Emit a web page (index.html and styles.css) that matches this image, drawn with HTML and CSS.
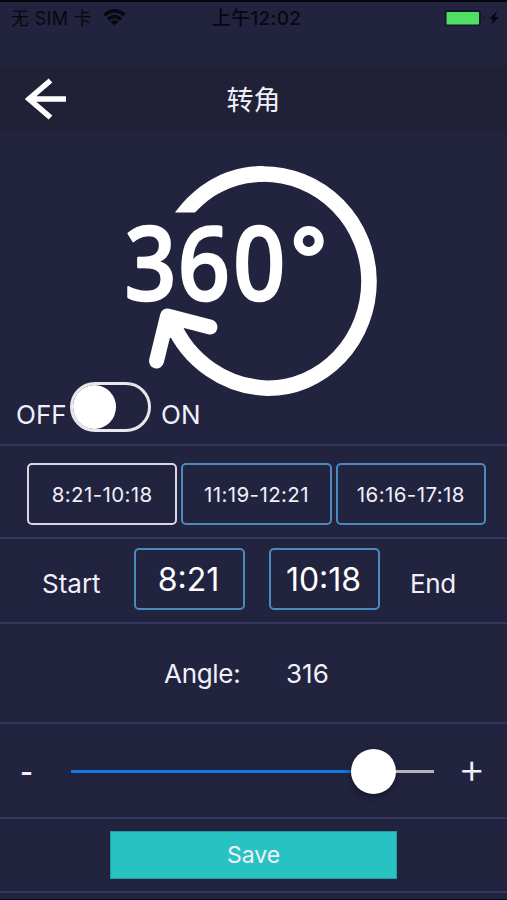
FILE: index.html
```
<!DOCTYPE html>
<html lang="zh-CN">
<head>
<meta charset="utf-8">
<title>转角</title>
<link rel="stylesheet" href="styles.css">
</head>
<body>
<div class="status">
  <div class="carrier"><span>无 SIM 卡</span>
    <svg class="wifi" width="23" height="17" viewBox="0 0 23 17"><g fill="none" stroke="#080811" stroke-width="3.6"><path d="M1.300 6.200Q11.500-2.500 21.700 6.200"/><path d="M5 10.400Q11.500 4.800 18 10.400"/></g><path d="M7.500 12.700Q11.500 9.500 15.500 12.700L11.500 16.600Z" fill="#080811"/></svg>
  </div>
  <span class="clock">上午12:02</span>
  <svg class="battery" width="58" height="18" viewBox="0 0 58 18"><rect x=".7" y="1" width="36.6" height="16" rx="3" fill="#18182b"/><rect x="2.500" y="3" width="32.500" height="12.500" rx="1" fill="#50df65"/><path d="M39.500 7q2 2 0 4z" fill="#101020"/><path d="M53 2 45 10h4l-2 6 8-8h-4z" fill="#080811"/></svg>
</div>
<header class="nav">
  <svg class="back" width="42" height="42" viewBox="0 0 42 42"><path d="M41 21H4M25.500 2.500 4 21 25.500 39.500" fill="none" stroke="#fff" stroke-width="5.600"/></svg>
  <h1>转角</h1>
</header>
<section class="hero">
  <svg class="dial" width="507" height="312" viewBox="0 132 507 312">
    <g fill="none" stroke="#fff" stroke-width="15.600">
      <path d="M263 174A106 107.500 0 0 1 369 281.500A101 107 0 0 1 268 388.200A107 107 0 0 1 172 322"/>
      <path d="M156.500 361 167.500 316 210 327" stroke-width="15" stroke-linecap="round" stroke-linejoin="round"/>
      <circle cx="308.700" cy="241" r="10.500" stroke-width="9"/>
    </g>
    <path d="M175 212.500C196 184 226 166 263.500 166V182C236 182 213 193 195 212.500Z" fill="#fff"/>
    <path d="M167 315 190 321 183 329 171 338 162 337Z" fill="#fff"/>
    <text class="degrees" transform="scale(.89 1)" x="140 200 262" y="300">360</text>
  </svg>
  <div class="switch-row"><span class="off">OFF</span><span class="toggle"><i></i></span><span class="on">ON</span></div>
</section>
<section class="presets">
  <button class="box active">8:21-10:18</button><button class="box">11:19-12:21</button><button class="box">16:16-17:18</button>
</section>
<section class="times">
  <span class="label start">Start</span><button class="box">8:21</button><button class="box">10:18</button><span class="label end">End</span>
</section>
<section class="angle"><span class="name">Angle:</span><span class="value">316</span></section>
<section class="slider">
  <span class="minus">-</span>
  <div class="track"><div class="fill"></div><div class="knob"></div><div class="rest"></div></div>
  <span class="plus">+</span>
</section>
<section class="actions"><button class="save">Save</button></section>
</body>
</html>
```
FILE: styles.css
```
* { box-sizing: border-box; }
body {
  margin: 0;
  width: 507px;
  height: 900px;
  overflow: hidden;
  background: #22233e;
  border-top: 2px solid #05050d;
  border-bottom: 1px solid #05050d;
  color: #f0f0fa;
  font-family: Inter, "Noto Sans CJK SC", sans-serif;
}
button { font: inherit; letter-spacing: inherit; color: inherit; background: none; padding: 0; }
section { border-bottom: 2px solid #35365b; }
.status {
  height: 64px;
  display: grid;
  grid-template-columns: 1fr auto 1fr;
  align-items: start;
  padding: 3px 5px 0 11px;
  color: #080811;
  font-size: 18px;
  line-height: 27px;
}
.carrier { display: flex; gap: 11px; letter-spacing: 0.3px; }
.wifi { margin-top: 4px; }
.clock { font-weight: 500; font-size: 19px; letter-spacing: 0.3px; }
.battery { justify-self: end; margin-top: 4px; }
.nav {
  height: 66px;
  background: #202136;
  display: grid;
  grid-template-columns: 80px 1fr 80px;
  align-items: center;
}
.back { margin-left: 25px; }
h1 { margin: 3px 0 0; text-align: center; font-size: 27px; font-weight: 400; line-height: 40px; }
.hero { height: 314px; display: grid; }
.dial, .switch-row { grid-area: 1 / 1; }
.degrees { font: 500 102px "Noto Sans", sans-serif; fill: #fff; stroke: #fff; stroke-width: 2.5px; stroke-linejoin: round; }
.switch-row { align-self: end; display: flex; height: 62px; font-size: 26px; line-height: 32px; padding-left: 16px; }
.off, .on { margin-top: 17px; }
.off { width: 54px; }
.on { margin-left: 10px; }
.toggle { width: 81px; height: 50px; border: 3px solid #e8e8ec; border-radius: 25px; }
.toggle i { display: block; width: 43px; height: 44px; border-radius: 50%; background: #fff; }
.presets { height: 93px; display: flex; gap: 4px; padding: 17px 21px 0 27px; font-size: 20.5px; letter-spacing: 0.4px; }
.box { border: 2px solid #4a8abd; border-radius: 5px; height: 62px; }
.presets .box { flex: 1; }
.presets .active { border-color: #d8d8e4; }
.times { height: 85px; display: flex; padding: 9px 0 0 42px; font-size: 26px; }
.times .box { width: 111px; margin-right: 24px; font-size: 32px; color: #fff; padding-right: 2px; }
.label { line-height: 32px; margin-top: 20px; }
.start { width: 92px; }
.end { margin-left: 6px; letter-spacing: -0.4px; }
.angle { height: 100px; display: flex; align-items: center; padding-left: 164px; font-size: 26px; }
.name { width: 122px; letter-spacing: -0.3px; }
.slider { height: 95px; display: flex; align-items: center; padding: 2px 0 0 20px; }
.minus, .plus { width: 30px; line-height: 36px; margin-top: 0; }
.minus { font-size: 28px; font-weight: 600; }
.plus { font-size: 42px; font-weight: 300; margin-top: -7px; }
.track { width: 363px; display: flex; align-items: center; margin: 0 24px 0 21px; }
.fill { width: 280px; height: 3px; background: #1179e3; }
.knob { width: 45px; height: 45px; border-radius: 50%; background: #fff; box-shadow: 0 3px 6px #15162c; }
.rest { flex: 1; height: 3px; background: #b6b6b8; }
.actions { height: 74px; display: flex; justify-content: center; align-items: center; }
.save { width: 287px; height: 48px; border: 1px solid #249ca5; background: #28c2c2; font-size: 23px; }
```
